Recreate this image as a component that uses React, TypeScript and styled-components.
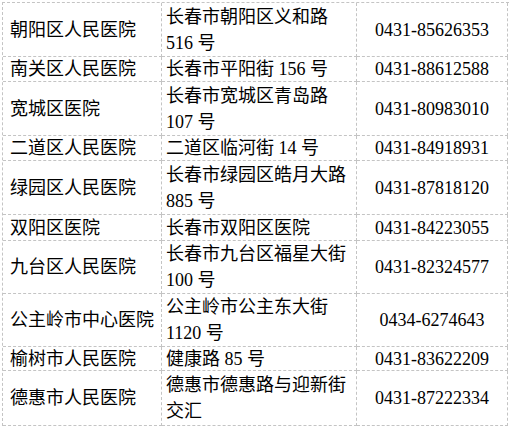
import React from "react";
import styled, { createGlobalStyle } from "styled-components";

const GlobalStyle = createGlobalStyle`
  html, body {
    margin: 0;
    padding: 0;
    background: #ffffff;
  }
  body {
    font-family: "Liberation Serif", "Noto Sans CJK JP", "Noto Sans CJK SC", serif;
    color: #000000;
  }
`;

const Page = styled.div`
  padding: 2px;
`;

const Table = styled.div`
  display: flex;
  flex-direction: column;
  width: 506px;
  border-top: 1px dashed #c4c4c4;
  border-left: 1px dashed #c4c4c4;
  font-size: 18px;
`;

const Row = styled.div<{ $h: number }>`
  display: grid;
  grid-template-columns: 159px 195px 151px;
  height: ${(p) => p.$h}px;
`;

const Cell = styled.div`
  display: flex;
  flex-direction: column;
  justify-content: center;
  border-right: 1px dashed #c4c4c4;
  border-bottom: 1px dashed #c4c4c4;
  white-space: nowrap;
  overflow: hidden;
`;

const NameCell = styled(Cell)`
  padding: 0 0 0 7px;
  line-height: 24px;
`;

const AddressCell = styled(Cell)`
  padding: 0 0 0 4px;
  line-height: 26px;
`;

const PhoneCell = styled(Cell)`
  align-items: center;
  line-height: 24px;
`;

const Line = styled.span`
  display: block;
`;

type Hospital = {
  name: string;
  address: string[];
  phone: string;
  h: number;
};

const hospitals: Hospital[] = [
  { name: "朝阳区人民医院", address: ["长春市朝阳区义和路", "516 号"], phone: "0431-85626353", h: 54 },
  { name: "南关区人民医院", address: ["长春市平阳街 156 号"], phone: "0431-88612588", h: 25 },
  { name: "宽城区医院", address: ["长春市宽城区青岛路", "107 号"], phone: "0431-80983010", h: 54 },
  { name: "二道区人民医院", address: ["二道区临河街 14 号"], phone: "0431-84918931", h: 25 },
  { name: "绿园区人民医院", address: ["长春市绿园区皓月大路", "885 号"], phone: "0431-87818120", h: 54 },
  { name: "双阳区医院", address: ["长春市双阳区医院"], phone: "0431-84223055", h: 26 },
  { name: "九台区人民医院", address: ["长春市九台区福星大街", "100 号"], phone: "0431-82324577", h: 53 },
  { name: "公主岭市中心医院", address: ["公主岭市公主东大街", "1120 号"], phone: "0434-6274643", h: 53 },
  { name: "榆树市人民医院", address: ["健康路 85 号"], phone: "0431-83622209", h: 24 },
  { name: "德惠市人民医院", address: ["德惠市德惠路与迎新街", "交汇"], phone: "0431-87222334", h: 55 },
];

export default function App() {
  return (
    <Page lang="zh-CN">
      <GlobalStyle />
      <Table>
        {hospitals.map((hp) => (
          <Row key={hp.name} $h={hp.h}>
            <NameCell>{hp.name}</NameCell>
            <AddressCell>
              {hp.address.map((l) => (
                <Line key={l}>{l}</Line>
              ))}
            </AddressCell>
            <PhoneCell>{hp.phone}</PhoneCell>
          </Row>
        ))}
      </Table>
    </Page>
  );
}
